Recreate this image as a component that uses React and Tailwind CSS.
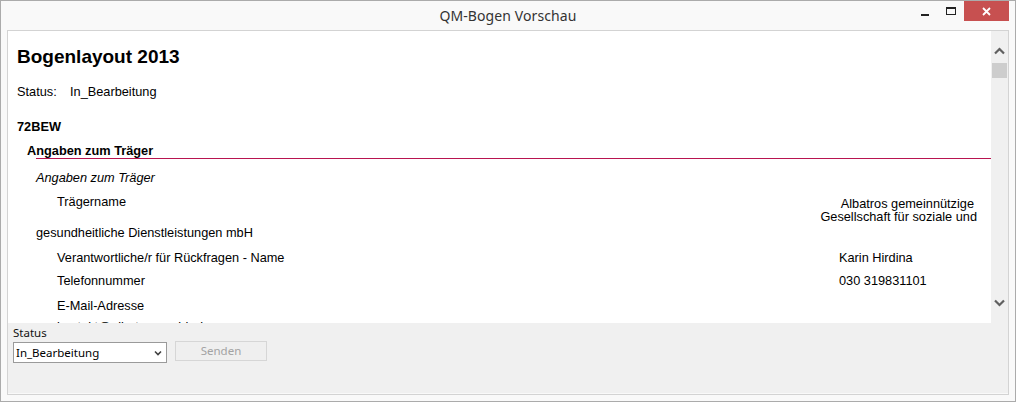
import React from 'react';

const rows = [
  { label: 'Verantwortliche/r für Rückfragen - Name', value: 'Karin Hirdina', mt: 'mt-[10px]' },
  { label: 'Telefonnummer', value: '030 319831101', mt: 'mt-[8px]' },
  { label: 'E-Mail-Adresse', value: '', mt: 'mt-[10px]' },
];

const TitleBar = () => (
  <div className="relative h-[29px] flex items-center justify-center shrink-0">
    <span className="text-[14px] text-[#333] tracking-[0.1px]" style={{ fontFamily: '"Noto Sans", sans-serif' }}>
      QM-Bogen Vorschau
    </span>
    <div className="absolute top-0 right-[6px] flex items-start">
      <div className="w-[26px] h-[20px] flex items-center justify-center">
        <div className="w-[8px] h-[2px] bg-[#222] mt-[7px]" />
      </div>
      <div className="w-[26px] h-[20px] flex items-center justify-center">
        <div className="w-[10px] h-[8px] border border-[#222] border-t-2 -mt-[1px]" />
      </div>
      <div className="w-[45px] h-[20px] bg-[#c75050] flex items-center justify-center">
        <svg width="9" height="9" viewBox="0 0 9 9">
          <path d="M1 1L8 8M8 1L1 8" stroke="#fff" strokeWidth="1.8" />
        </svg>
      </div>
    </div>
  </div>
);

const ScrollBar = () => (
  <div className="w-[17px] bg-[#f0f0f0] flex flex-col items-center">
    <svg className="mt-[16px]" width="11" height="8" viewBox="0 0 11 8">
      <path d="M1 6.5L5.5 2L10 6.5" stroke="#606060" strokeWidth="2.2" fill="none" />
    </svg>
    <div className="mt-[8px] w-[15px] h-[15px] bg-[#cdcdcd]" />
    <div className="flex-1" />
    <svg className="mb-[16px]" width="11" height="8" viewBox="0 0 11 8">
      <path d="M1 1.5L5.5 6L10 1.5" stroke="#606060" strokeWidth="2.2" fill="none" />
    </svg>
  </div>
);

const Preview = () => (
  <div className="flex-1 bg-white overflow-hidden text-black text-[12.75px] leading-[15px]" style={{ fontFamily: '"Liberation Sans", Arial, sans-serif' }}>
    <h1 className="mt-[15px] pl-[9px] text-[19px] leading-[22px] font-bold">Bogenlayout 2013</h1>
    <div className="mt-[16px] pl-[9px] flex">
      <span className="w-[53px]">Status:</span>
      <span>In_Bearbeitung</span>
    </div>
    <div className="mt-[20px] pl-[9px] font-bold">72BEW</div>
    <div className="mt-[10px] pl-[19px] font-bold leading-[14px]">Angaben zum Träger</div>
    <div className="ml-[28px] h-px bg-[#b81450]" />
    <div className="mt-[11px] pl-[28px] italic">Angaben zum Träger</div>
    <div className="mt-[9px] flex">
      <div className="flex-1 pl-[49px]">Trägername</div>
      <div className="w-[170px] mr-[14px] text-right leading-[13px] pt-[3px]">
        <div className="pr-[3px]">Albatros gemeinnützige</div>
        <div>Gesellschaft für soziale und</div>
      </div>
    </div>
    <div className="mt-[2px] pl-[28px]">gesundheitliche Dienstleistungen mbH</div>
    {rows.map((row) => (
      <div key={row.label} className={`${row.mt} flex`}>
        <div className="w-[831px] pl-[49px]">{row.label}</div>
        <div>{row.value}</div>
      </div>
    ))}
    <div className="mt-[6px] pl-[49px]">kontakt@albatros-gmbh.de</div>
  </div>
);

const BottomPanel = () => (
  <div className="h-[70px] bg-[#f0f0f0] pl-[5px] pt-[2px] text-[12px]" style={{ fontFamily: '"Noto Sans", sans-serif' }}>
    <div className="leading-[16px] text-[#111] text-[11.5px]">Status</div>
    <div className="mt-[1px] flex gap-[8px]">
      <div className="w-[154px] h-[21px] bg-white border border-[#9a9a9a] flex items-center justify-between pl-[2px] pr-[4px]">
        <span className="text-[11.5px] text-black">In_Bearbeitung</span>
        <svg width="8" height="6" viewBox="0 0 8 6">
          <path d="M1 1.5L4 4.5L7 1.5" stroke="#404040" strokeWidth="1.6" fill="none" />
        </svg>
      </div>
      <div className="w-[92px] h-[20px] -mt-[1px] border border-[#d6d6d6] bg-[#efefef] flex items-center justify-center text-[11.5px] text-[#a3a3a3]">
        Senden
      </div>
    </div>
  </div>
);

export default function App() {
  return (
    <div className="w-[1016px] h-[402px] border border-[#ababab] bg-[#f9f9f9] flex flex-col overflow-hidden">
      <TitleBar />
      <div className="flex-1 mx-[6px] mb-[6px] border border-[#d3d3d3] flex flex-col">
        <div className="h-[292px] flex">
          <Preview />
          <ScrollBar />
        </div>
        <BottomPanel />
      </div>
    </div>
  );
}
